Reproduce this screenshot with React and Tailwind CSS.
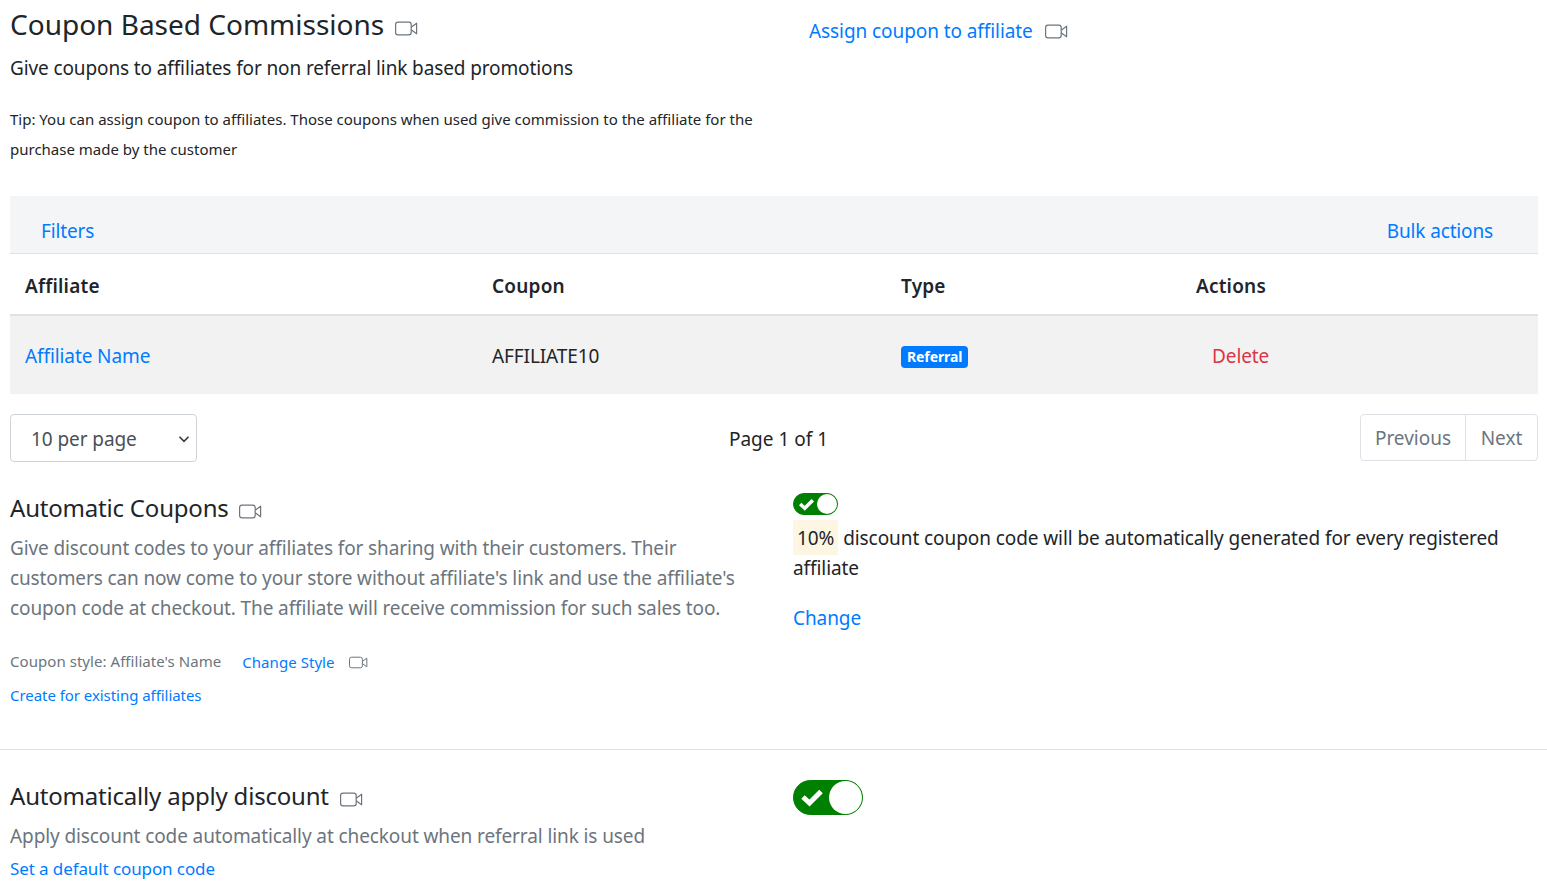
const VideoIcon = ({ className = "" }) => (
  <svg viewBox="0 0 23 15" fill="none" className={`inline-block w-[23px] h-[15px] text-[#6c757d] ${className}`} stroke="currentColor" strokeWidth="1.2">
    <rect x="0.6" y="1.1" width="15.6" height="12.8" rx="2.4" />
    <path d="M16.2 6.2 L21.6 2.2 V12.8 L16.2 8.8" strokeLinejoin="round" />
  </svg>
);

const Toggle = ({ big }) =>
  big ? (
    <div className="flex items-center w-[70px] h-[35px] rounded-full bg-[#008000] border border-[#008000]">
      <svg viewBox="0 0 24 20" className="w-[24px] h-[20px] ml-[6px] mb-[2px]">
        <path d="M3 10 L9.5 16 L21 4.5" fill="none" stroke="#fff" strokeWidth="5" />
      </svg>
      <span className="ml-auto w-[33px] h-[33px] rounded-full bg-white" />
    </div>
  ) : (
    <div className="flex items-center w-[45px] h-[22px] rounded-full bg-[#008000] border border-[#008000]">
      <svg viewBox="0 0 24 20" className="w-[17px] h-[14px] ml-[4px]">
        <path d="M3 10 L9.5 16 L21 4.5" fill="none" stroke="#fff" strokeWidth="5" />
      </svg>
      <span className="ml-auto w-[20px] h-[20px] rounded-full bg-white" />
    </div>
  );

export default function App() {
  return (
    <div className="font-['Noto_Sans',sans-serif] text-[#212529] bg-white h-[892px] overflow-hidden">
      {/* HEADER */}
      <div className="flex px-[10px] h-[196px]">
        <div className="w-[799px] pt-[4px]">
          <h1 className="text-[28px] leading-[40px] flex items-center gap-[11px]">
            Coupon Based Commissions <VideoIcon className="mt-[9px]" />
          </h1>
          <p className="text-[19px] leading-[30px] mt-[9px] tracking-[-0.12px]">Give coupons to affiliates for non referral link based promotions</p>
          <p className="text-[15px] leading-[30px] mt-[21px] w-[770px]">
            Tip: You can assign coupon to affiliates. Those coupons when used give commission to the affiliate for the purchase made by the customer
          </p>
        </div>
        <div className="pt-[16px]">
          <a className="text-[#007bff] text-[19px] leading-[30px] flex items-center gap-[12px] tracking-[-0.08px]">
            Assign coupon to affiliate <VideoIcon />
          </a>
        </div>
      </div>

      {/* TABLE */}
      <div className="ml-[10px] mr-[9px]">
        <div className="flex justify-between items-center h-[58px] bg-[#f4f5f7] border-b border-[#dee2e6] pl-[31px] pr-[45px] pt-[13px] text-[19px] text-[#007bff] tracking-[-0.15px]">
          <a>Filters</a>
          <a>Bulk actions</a>
        </div>
        <div className="grid grid-cols-[467px_409px_295px_1fr] items-center h-[62px] border-b-2 border-[#dee2e6] pl-[15px] pt-[4px] text-[19px] font-semibold tracking-[0.2px]">
          <span>Affiliate</span>
          <span>Coupon</span>
          <span>Type</span>
          <span>Actions</span>
        </div>
        <div className="grid grid-cols-[467px_409px_295px_1fr] items-center h-[78px] bg-[#f2f2f2] pl-[15px] pt-[2px] text-[19px] tracking-[-0.1px]">
          <a className="text-[#007bff]">Affiliate Name</a>
          <span>AFFILIATE10</span>
          <span className="flex">
            <span className="bg-[#007bff] text-white text-[14px] leading-[22px] font-bold px-[6px] rounded-[4px] mt-[1px]">Referral</span>
          </span>
          <a className="text-[#dc3545] pl-[16px]">Delete</a>
        </div>
      </div>

      {/* PAGINATION */}
      <div className="flex items-start justify-between ml-[10px] mr-[9px] mt-[20px] h-[48px]">
        <div className="flex items-center justify-between w-[187px] h-[48px] border border-[#ced4da] rounded-[4px] pl-[20px] pr-[6px] pt-[2px] text-[19px] text-[#495057] tracking-[-0.08px]">
          10 per page
          <svg viewBox="0 0 16 16" className="w-[12px] h-[12px]" fill="none" stroke="#343a40" strokeWidth="2.2">
            <path d="M2 5 L8 11 L14 5" />
          </svg>
        </div>
        <span className="text-[19px] leading-[50px]">Page 1 of 1</span>
        <div className="flex w-[178px] h-[47px] border border-[#dee2e6] rounded-[4px] text-[19px] text-[#6c757d] pt-[2px]">
          <span className="flex items-center justify-center w-[105px] border-r border-[#dee2e6] -mt-[2px] pt-[2px]">Previous</span>
          <span className="flex items-center justify-center flex-1">Next</span>
        </div>
      </div>

      {/* AUTOMATIC COUPONS */}
      <div className="flex px-[10px] h-[288px] border-b border-[#dee2e6]">
        <div className="w-[783px] pt-[26px]">
          <h2 className="text-[24px] leading-[40px] flex items-center gap-[10px] tracking-[-0.2px]">
            Automatic Coupons <VideoIcon className="mt-[7px]" />
          </h2>
          <p className="text-[19px] leading-[30px] text-[#6c757d] w-[745px] mt-[5px] tracking-[-0.12px]">
            Give discount codes to your affiliates for sharing with their customers. Their customers can now come to your store without affiliate's link and use the affiliate's coupon code at checkout. The affiliate will receive commission for such sales too.
          </p>
          <div className="flex items-center mt-[21px] text-[15px] leading-[30px]">
            <span className="text-[#6c757d] tracking-[0.05px]">Coupon style: Affiliate's Name</span>
            <a className="text-[#007bff] ml-[21px] mt-[3px] tracking-[0.05px]">Change Style</a>
            <VideoIcon className="ml-[14px] mt-[3px] !w-[19px] !h-[13px]" />
          </div>
          <a className="block text-[#007bff] text-[15px] leading-[30px] mt-[3px] tracking-[-0.05px]">Create for existing affiliates</a>
        </div>
        <div className="flex-1 pt-[31px]">
          <Toggle />
          <p className="text-[19px] leading-[30px] mt-[8px] tracking-[-0.08px]">
            <span className="bg-[#fdf6e3] px-[4px] pt-[5px] pb-[4px]">10%</span> discount coupon code will be automatically generated for every registered affiliate
          </p>
          <a className="block text-[#007bff] text-[19px] leading-[30px] mt-[20px] tracking-[-0.08px]">Change</a>
        </div>
      </div>

      {/* AUTO APPLY */}
      <div className="flex px-[10px]">
        <div className="w-[783px] pt-[26px]">
          <h2 className="text-[24px] leading-[40px] flex items-center gap-[11px] tracking-[-0.2px]">
            Automatically apply discount <VideoIcon className="mt-[7px]" />
          </h2>
          <p className="text-[19px] leading-[30px] text-[#6c757d] mt-[5px] tracking-[-0.1px]">Apply discount code automatically at checkout when referral link is used</p>
          <a className="block text-[#007bff] text-[17px] leading-[30px] mt-[3px] tracking-[-0.1px]">Set a default coupon code</a>
        </div>
        <div className="pt-[30px]">
          <Toggle big />
        </div>
      </div>
    </div>
  );
}
